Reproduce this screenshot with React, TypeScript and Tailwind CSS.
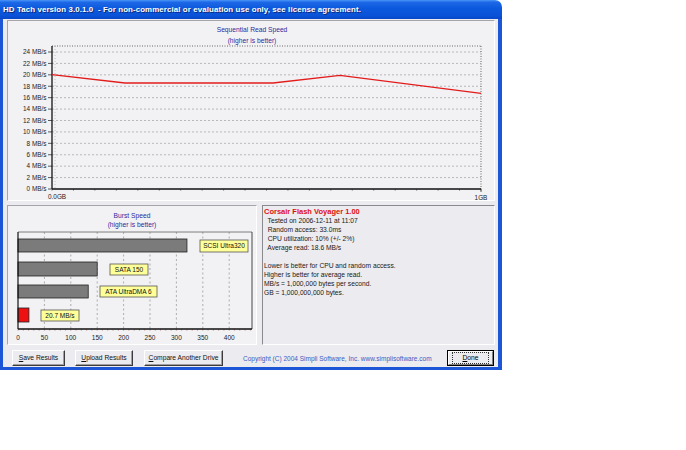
import React from "react";

const F = "'Liberation Sans', Arial, sans-serif";

function SeqChart() {
  const L = 45, T = 26, R = 474, B = 169;
  const y = (v: number) => B - v * (137 / 24);
  const vals = [0, 2, 4, 6, 8, 10, 12, 14, 16, 18, 20, 22, 24];
  const bottomTicks: number[] = [];
  for (let x = L; x <= R; x += 21.45) bottomTicks.push(x);
  return (
    <svg width={486} height={179} viewBox="1 1 486 179" className="block">
      <text x={245} y={11.5} fontFamily={F} fontSize={6.7} fill="#2b2b9c" textAnchor="middle">Sequential Read Speed</text>
      <text x={245} y={22.5} fontFamily={F} fontSize={6.7} fill="#2b2b9c" textAnchor="middle">(higher is better)</text>
      {vals.map((v) => (
        <g key={v}>
          {v > 0 && <line x1={L} x2={R} y1={y(v)} y2={y(v)} stroke="#a9a9ad" strokeWidth={0.8} strokeDasharray="2 2" />}
          <line x1={41} x2={L} y1={y(v)} y2={y(v)} stroke="#333" strokeWidth={0.8} />
          <text x={39.5} y={y(v) + 2.3} fontFamily={F} fontSize={6.4} fill="#222" textAnchor="end">{v} MB/s</text>
        </g>
      ))}
      <line x1={48} x2={48} y1={T} y2={B} stroke="#b5b5b5" strokeWidth={0.8} strokeDasharray="1 2" />
      <line x1={L} x2={R} y1={T} y2={T} stroke="#444" strokeWidth={0.8} strokeDasharray="1 1.5" />
      <line x1={R} x2={R} y1={T} y2={B} stroke="#444" strokeWidth={0.8} strokeDasharray="1 1.5" />
      {bottomTicks.map((x, i) => (
        <line key={i} x1={x} x2={x} y1={B} y2={B + 1.8} stroke="#555" strokeWidth={0.6} />
      ))}
      <line x1={R} x2={R} y1={B} y2={B + 3} stroke="#333" strokeWidth={0.8} />
      <line x1={L} x2={L} y1={T} y2={B} stroke="#111" strokeWidth={1.3} />
      <line x1={L} x2={R} y1={B} y2={B} stroke="#111" strokeWidth={1.4} />
      <polyline
        points="45,54.7 118,63 266,63 333,55.3 474,73.3"
        fill="none"
        stroke="#e21c1c"
        strokeWidth={1.3}
      />
      <text x={41} y={179.3} fontFamily={F} fontSize={6.4} fill="#222">0.0GB</text>
      <text x={474} y={180} fontFamily={F} fontSize={6.4} fill="#222" textAnchor="middle">1GB</text>
    </svg>
  );
}

function BurstChart() {
  const L = 11, T = 27, R = 245, B = 124;
  const k = 26.4 / 50;
  const grid = [1, 2, 3, 4, 5, 6, 7, 8];
  const bars = [
    { v: 320, y1: 34, y2: 47, fill: "#7b7b7b", label: "SCSI Ultra320", lx: 193, lw: 48, ly: 35, lh: 12 },
    { v: 150, y1: 57, y2: 71, fill: "#7b7b7b", label: "SATA 150", lx: 103, lw: 38, ly: 59, lh: 11 },
    { v: 133, y1: 80, y2: 93, fill: "#7b7b7b", label: "ATA UltraDMA 6", lx: 93, lw: 57, ly: 81, lh: 11 },
    { v: 20.7, y1: 103, y2: 117, fill: "#ee1111", label: "20.7 MB/s", lx: 34, lw: 38, ly: 105, lh: 11 },
  ];
  const ticks: number[] = [];
  for (let v = 0; v <= 440; v += 10) ticks.push(L + v * k);
  return (
    <svg width={248} height={138} viewBox="1 1 248 138" className="block">
      <text x={125} y={12.5} fontFamily={F} fontSize={6.7} fill="#2b2b9c" textAnchor="middle">Burst Speed</text>
      <text x={125} y={21.5} fontFamily={F} fontSize={6.7} fill="#2b2b9c" textAnchor="middle">(higher is better)</text>
      {grid.map((g) => (
        <line key={g} x1={L + g * 26.4} x2={L + g * 26.4} y1={T} y2={B} stroke="#9a9a9a" strokeWidth={0.8} strokeDasharray="2 2.5" />
      ))}
      <line x1={L} x2={R} y1={T} y2={T} stroke="#6f6f6f" strokeWidth={0.9} />
      <line x1={R} x2={R} y1={T} y2={B} stroke="#333" strokeWidth={0.9} />
      {ticks.map((x, i) => (
        <line key={i} x1={x} x2={x} y1={B} y2={B + 1.8} stroke="#b06060" strokeWidth={0.5} />
      ))}
      {bars.map((b) => (
        <g key={b.label}>
          <rect x={L} y={b.y1} width={b.v * k} height={b.y2 - b.y1} fill={b.fill} stroke="#222" strokeWidth={0.8} />
          <rect x={b.lx} y={b.ly} width={b.lw} height={b.lh} fill="#ffff99" stroke="#555" strokeWidth={0.8} />
          <text x={b.lx + b.lw / 2} y={b.ly + b.lh / 2 + 2.3} fontFamily={F} fontSize={6.5} fill="#111" textAnchor="middle">{b.label}</text>
        </g>
      ))}
      <line x1={L} x2={L} y1={T} y2={B} stroke="#111" strokeWidth={1.2} />
      <line x1={L} x2={R} y1={B} y2={B} stroke="#111" strokeWidth={1.4} />
      {[0, 1, 2, 3, 4, 5, 6, 7, 8].map((g) => (
        <text key={g} x={L + g * 26.4} y={134.6} fontFamily={F} fontSize={6.5} fill="#222" textAnchor="middle">{g * 50}</text>
      ))}
    </svg>
  );
}

function Btn({ cls, children }: { cls: string; children: React.ReactNode }) {
  return (
    <div className={`h-[16px] flex items-center justify-center bg-[#ecebef] border border-t-white border-l-white border-b-[#3c3c3c] border-r-[#3c3c3c] shadow-[inset_-1px_-1px_0_#a0a0a0] ${cls}`}>
      <span className="text-[6.7px] leading-none text-[#111]">{children}</span>
    </div>
  );
}

export default function App() {
  return (
    <div className="w-[686px] h-[450px] bg-white font-['Liberation_Sans',Arial,sans-serif]">
      <div className="w-[502px] h-[370px] flex flex-col">
        <div className="h-[19px] shrink-0 rounded-tr-[7px] bg-[linear-gradient(to_bottom,#4a96f7_0%,#1d68e6_12%,#0c58dd_45%,#0a53d8_80%,#0847c8_100%)] flex items-center pl-[3px]">
          <span className="text-white font-bold text-[7.9px] tracking-[0.1px] whitespace-pre [text-shadow:1px_1px_0_#0a2a80]">
            {"HD Tach version 3.0.1.0  - For non-commercial or evaluation use only, see license agreement."}
          </span>
        </div>
        <div className="flex-1 flex bg-[#1c56d6] pl-[3px] pr-[4px] pb-[3px]">
          <div className="flex-1 bg-[#ecebef] flex flex-col pl-[4px] pr-[3px] pt-[1px]">
            <div className="h-[181px] shrink-0 border border-t-[#a6a6aa] border-l-[#a6a6aa] border-b-white border-r-white bg-[#f2f2f4]">
              <SeqChart />
            </div>
            <div className="h-[140px] mt-[4px] flex gap-[5px] shrink-0">
              <div className="w-[250px] h-[140px] border border-t-[#a6a6aa] border-l-[#a6a6aa] border-b-white border-r-white bg-[#f2f2f4]">
                <BurstChart />
              </div>
              <div className="flex-1 h-[140px] border border-t-[#8a8a8e] border-l-[#8a8a8e] border-b-white border-r-white bg-[#ecebef] pl-[1px] pt-[1px]">
                <div className="text-[7.5px] leading-[9px] font-bold text-[#e01010]">Corsair Flash Voyager 1.00</div>
                <div className="text-[6.7px] leading-[9px] text-[#1a1a1a] whitespace-pre">
                  <div>{"  Tested on 2006-12-11 at 11:07"}</div>
                  <div>{"  Random access: 33.0ms"}</div>
                  <div>{"  CPU utilization: 10% (+/- 2%)"}</div>
                  <div>{"  Average read: 18.6 MB/s"}</div>
                  <div className="h-[9px]"></div>
                  <div>Lower is better for CPU and random access.</div>
                  <div>Higher is better for average read.</div>
                  <div>MB/s = 1,000,000 bytes per second.</div>
                  <div>GB = 1,000,000,000 bytes.</div>
                </div>
              </div>
            </div>
            <div className="mt-[5px] h-[16px] flex items-center pl-[5px]">
              <Btn cls="w-[53px]"><u>S</u>ave Results</Btn>
              <Btn cls="w-[58px] ml-[10px]"><u>U</u>pload Results</Btn>
              <Btn cls="w-[79px] ml-[11px]"><u>C</u>ompare Another Drive</Btn>
              <div className="ml-[20px] text-[6.5px] text-[#3b5cc4] whitespace-pre mt-[2px]">Copyright (C) 2004 Simpli Software, Inc. www.simplisoftware.com</div>
              <div className="ml-auto mr-[1px] w-[47px] h-[16px] border border-black flex">
                <div className="flex-1 flex items-center justify-center border border-t-white border-l-white border-b-[#808080] border-r-[#808080] bg-[#ecebef]">
                  <span className="text-[6.7px] leading-none px-[9px] py-[2px] outline-1 outline-dotted outline-[#333] outline-offset-0"><u>D</u>one</span>
                </div>
              </div>
            </div>
          </div>
        </div>
      </div>
    </div>
  );
}
